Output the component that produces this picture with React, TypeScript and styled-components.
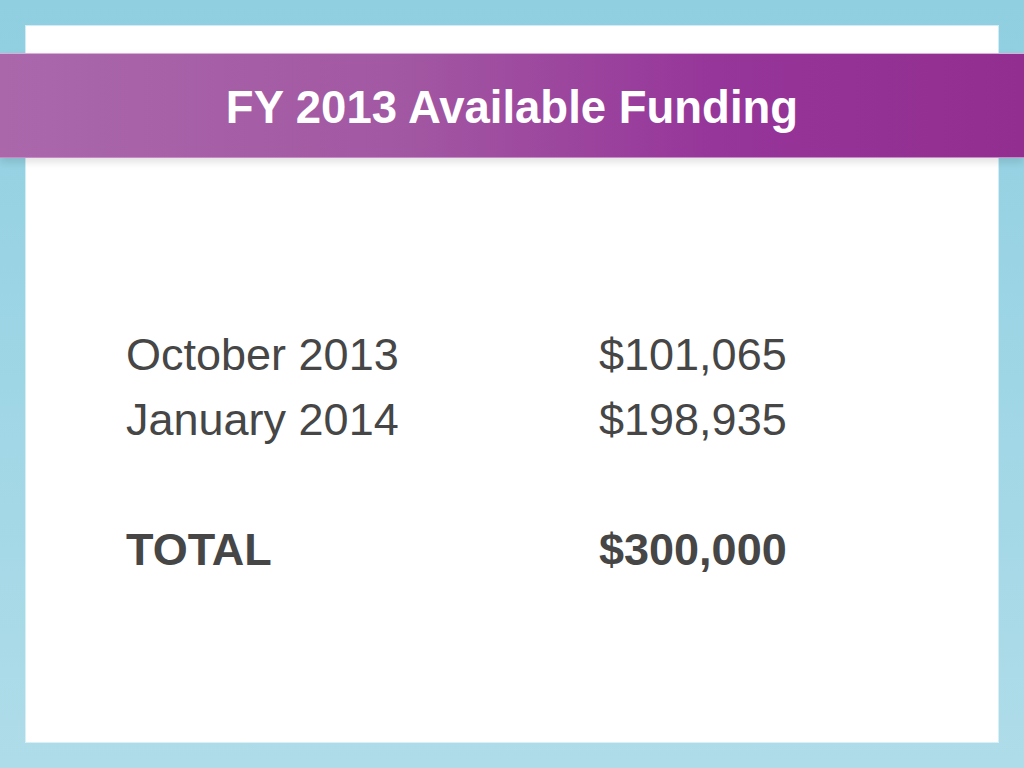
import React from 'react';
import styled, { createGlobalStyle } from 'styled-components';

const GlobalStyle = createGlobalStyle`
  html, body {
    margin: 0;
    padding: 0;
  }
  body {
    font-family: "Liberation Sans", Arial, sans-serif;
  }
`;

interface Row {
  label: string;
  amount: string;
  total?: boolean;
  gapBefore?: boolean;
}

const rows: Row[] = [
  { label: 'October 2013', amount: '$101,065' },
  { label: 'January 2014', amount: '$198,935' },
  { label: 'TOTAL', amount: '$300,000', total: true, gapBefore: true },
];

const App: React.FC = () => {
  return (
    <>
      <GlobalStyle />
      <Slide>
        <Card>
          <Banner>
            <Title>FY 2013 Available Funding</Title>
          </Banner>
          <Table>
            {rows.map((row) => (
              <React.Fragment key={row.label}>
                <Cell $bold={row.total} $gap={row.gapBefore}>
                  {row.label}
                </Cell>
                <Cell $bold={row.total} $gap={row.gapBefore}>
                  {row.amount}
                </Cell>
              </React.Fragment>
            ))}
          </Table>
        </Card>
      </Slide>
    </>
  );
};

const Slide = styled.div`
  width: 1024px;
  height: 768px;
  box-sizing: border-box;
  padding: 26px;
  background: linear-gradient(180deg, #8fcfe0 0%, #9fd6e6 50%, #afdce9 100%);
  overflow: hidden;
`;

const Card = styled.div`
  height: 100%;
  box-sizing: border-box;
  background: #ffffff;
  box-shadow: 0 0 0 1px rgba(235, 248, 252, 0.7);
  padding-top: 27px;
  display: flex;
  flex-direction: column;
`;

const Banner = styled.div`
  margin: 0 -26px;
  height: 105px;
  box-sizing: border-box;
  display: flex;
  align-items: center;
  justify-content: center;
  background: linear-gradient(90deg, #aa68ab 0%, #a257a2 40%, #96359a 70%, #922e8f 100%);
  border-top: 1px solid #d9aed9;
  border-bottom: 1px solid #c48bc4;
  box-shadow: 0 4px 8px rgba(0, 0, 0, 0.12);
`;

const Title = styled.h1`
  margin: 0;
  padding-top: 4px;
  color: #ffffff;
  font-size: 45.5px;
  font-weight: bold;
`;

const Table = styled.div`
  margin-top: 164px;
  padding-left: 100px;
  display: grid;
  grid-template-columns: 473px auto;
  justify-content: start;
`;

const Cell = styled.div<{ $bold?: boolean; $gap?: boolean }>`
  font-size: 45px;
  line-height: 65px;
  color: #464646;
  font-weight: ${(p) => (p.$bold ? 'bold' : 'normal')};
  margin-top: ${(p) => (p.$gap ? '65px' : '0')};
`;

export default App;
